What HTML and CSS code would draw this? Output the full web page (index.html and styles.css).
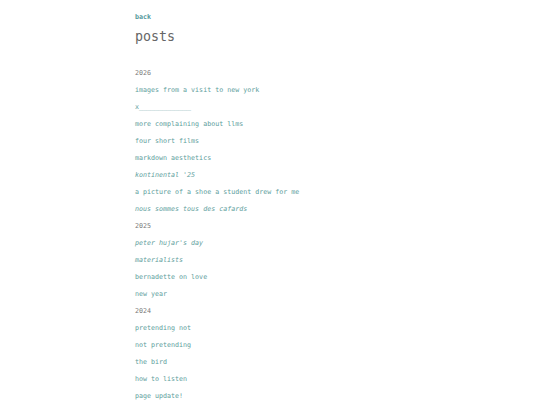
FILE: index.html
```html
<!DOCTYPE html>
<html>
<head>
<meta charset="utf-8">
<link rel="stylesheet" href="styles.css">
</head>
<body>
<main class="page">
  <a class="back" href="#">back</a>
  <h1 class="title">posts</h1>
  <ul class="posts">
    <li class="year">2026</li>
    <li><a href="#">images from a visit to new york</a></li>
    <li><a href="#">x_____________</a></li>
    <li><a href="#">more complaining about llms</a></li>
    <li><a href="#">four short films</a></li>
    <li><a href="#">markdown aesthetics</a></li>
    <li><a class="it" href="#">kontinental '25</a></li>
    <li><a href="#">a picture of a shoe a student drew for me</a></li>
    <li><a class="it" href="#">nous sommes tous des cafards</a></li>
    <li class="year">2025</li>
    <li><a class="it" href="#">peter hujar's day</a></li>
    <li><a class="it" href="#">materialists</a></li>
    <li><a href="#">bernadette on love</a></li>
    <li><a href="#">new year</a></li>
    <li class="year">2024</li>
    <li><a href="#">pretending not</a></li>
    <li><a href="#">not pretending</a></li>
    <li><a href="#">the bird</a></li>
    <li><a href="#">how to listen</a></li>
    <li><a href="#">page update!</a></li>
  </ul>
</main>
</body>
</html>
```
FILE: styles.css
```css
html, body {
  margin: 0;
  padding: 0;
  background: #ffffff;
}
body {
  font-family: "DejaVu Sans Mono", "Liberation Mono", monospace;
  font-size: 6.67px;
  color: #666666;
}
.page {
  width: 270px;
  margin: 0 auto;
  padding-top: 9px;
  display: flex;
  flex-direction: column;
}
a {
  color: #5e9e9c;
  text-decoration: none;
}
.back {
  line-height: 16px;
  font-weight: bold;
  color: #52979a;
}
.title {
  margin: 0;
  font-size: 13.33px;
  font-weight: normal;
  line-height: 23px;
  color: #666666;
}
.posts {
  list-style: none;
  margin: 0;
  padding: 0;
  padding-top: 17px;
}
.posts li {
  line-height: 17px;
}
.year {
  color: #777777;
}
.it {
  font-style: italic;
}
```
